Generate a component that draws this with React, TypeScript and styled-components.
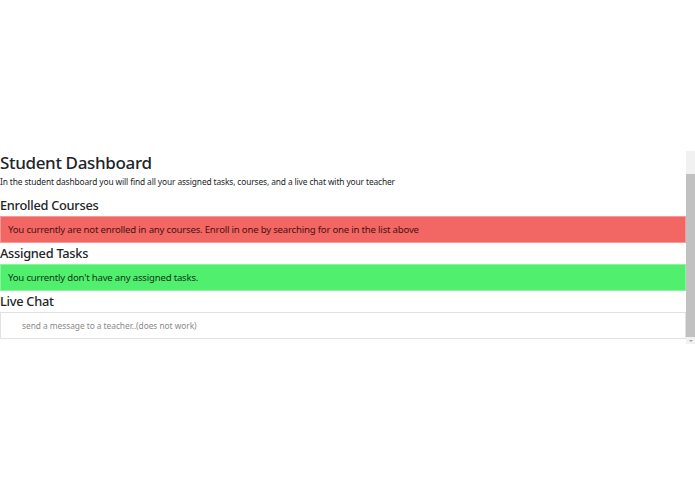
import React from 'react'
import styled, { createGlobalStyle } from 'styled-components'

const GlobalStyle = createGlobalStyle`
  html, body {
    margin: 0;
    padding: 0;
    background: #ffffff;
  }
  body {
    font-family: 'Noto Sans', 'Open Sans', sans-serif;
    color: #212529;
  }
`

const Page = styled.div`
  padding-top: 151px;
  height: 494px;
  box-sizing: border-box;
`

const Frame = styled.div`
  display: flex;
  height: 193px;
`

const Dashboard = styled.section`
  flex: 1;
  min-width: 0;
  overflow: hidden;
`

// scrollbar drawn by hand, the headless browser hides native ones
const Scrollbar = styled.div`
  width: 9px;
  flex: 0 0 9px;
  display: flex;
  flex-direction: column;
  background: #f1f1f1;
`

const Thumb = styled.div`
  margin-top: 23px;
  height: 163px;
  background: #c1c1c1;
`

const ArrowDown = styled.div`
  margin: 3px auto 0;
  width: 0;
  height: 0;
  border-left: 2px solid transparent;
  border-right: 2px solid transparent;
  border-top: 2px solid #a3a3a3;
`

const Title = styled.h1`
  margin: 0;
  font-size: 17px;
  line-height: 24px;
  font-weight: 500;
  letter-spacing: -0.35px;
`

const Intro = styled.p`
  margin: 0 0 6px;
  font-size: 8.4px;
  line-height: 14px;
  letter-spacing: -0.12px;
`

const SectionTitle = styled.h2`
  margin: 0 0 1px;
  font-size: 12.8px;
  line-height: 20px;
  font-weight: 500;
  letter-spacing: -0.27px;
`

const Alert = styled.div<{ $tone: 'danger' | 'success' }>`
  height: 27px;
  box-sizing: border-box;
  padding: 0 7px;
  font-size: 9.6px;
  line-height: 25px;
  letter-spacing: -0.2px;
  white-space: nowrap;
  border: 1px solid ${(p) => (p.$tone === 'danger' ? '#f59a97' : '#8df39f')};
  background: ${(p) => (p.$tone === 'danger' ? '#f26663' : '#50ef6e')};
  color: ${(p) => (p.$tone === 'danger' ? '#4a1212' : '#13361b')};
`

const ChatInput = styled.input`
  display: block;
  width: 100%;
  height: 27px;
  box-sizing: border-box;
  margin: 0;
  padding: 0 21px;
  border: 1px solid #e1e1e1;
  font-family: inherit;
  font-size: 8.4px;
  letter-spacing: -0.05px;
  outline: none;

  &::placeholder {
    color: #8a8a8a;
  }
`

export default function App() {
  return (
    <>
      <GlobalStyle />
      <Page>
        <Frame>
          <Dashboard>
            <Title>Student Dashboard</Title>
            <Intro>
              In the student dashboard you will find all your assigned tasks, courses, and a live
              chat with your teacher
            </Intro>
            <SectionTitle>Enrolled Courses</SectionTitle>
            <Alert $tone="danger">
              You currently are not enrolled in any courses. Enroll in one by searching for one in
              the list above
            </Alert>
            <SectionTitle>Assigned Tasks</SectionTitle>
            <Alert $tone="success">You currently don't have any assigned tasks.</Alert>
            <SectionTitle>Live Chat</SectionTitle>
            <ChatInput placeholder="send a message to a teacher..(does not work)" />
          </Dashboard>
          <Scrollbar>
            <Thumb />
            <ArrowDown />
          </Scrollbar>
        </Frame>
      </Page>
    </>
  )
}
